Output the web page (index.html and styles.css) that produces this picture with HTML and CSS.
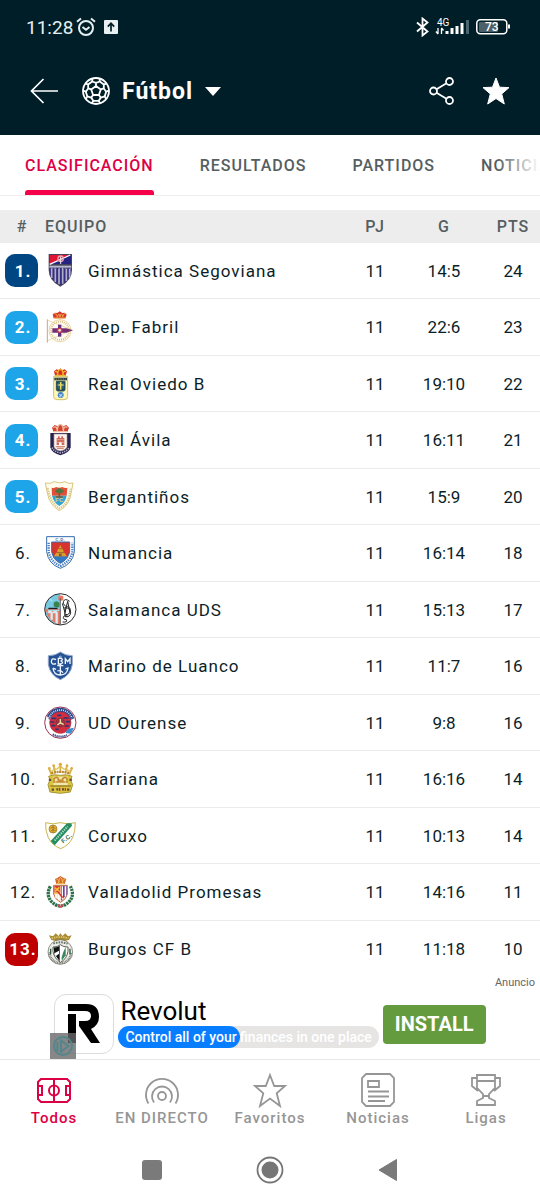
FILE: index.html
```html
<!DOCTYPE html>
<html lang="es">
<head>
<meta charset="utf-8">
<meta name="viewport" content="width=device-width, initial-scale=1">
<title>Fútbol</title>
<link rel="stylesheet" href="styles.css">
</head>
<body>
<div class="app">
  <header class="top">
    <div class="status">
      <span class="clock">11:28</span>
      <svg class="alarm" width="20" height="20" viewBox="0 0 20 20" fill="none" stroke="#e4f0f2" stroke-width="2"><circle cx="10" cy="11" r="7"/><path d="M1 4.800 5 1.500M19 4.800 15 1.500M6.500 10l3.500 2.800L13.500 10"/></svg>
      <svg width="14" height="14" viewBox="0 0 14 14"><rect width="14" height="14" rx="1" fill="#e8f0f2"/><path d="M7 11.500V4M3.800 6.600 7 3.200l3.200 3.400" fill="none" stroke="#001e28" stroke-width="1.700"/></svg>
      <span class="spacer"></span>
      <svg width="94" height="20" viewBox="0 0 94 20" fill="none">
        <path d="M1 5.500 11.500 14.500 6.500 18.500V1.500L11.500 5.500 1 14.500" stroke="#fff" stroke-width="1.800"/>
        <text x="21" y="9" class="net">4G</text>
        <path d="M22 11v6M20 14.500l2 2.500M25.500 17v-6M27.500 13.500l-2-2.500" stroke="#fff" stroke-width="1.300"/>
        <path d="M31 17v-3M36 17v-6M41 17V9M46 17V6" stroke="#fff" stroke-width="3"/><path d="M51.500 17V3" stroke="#4b6570" stroke-width="3"/>
        <rect x="60.800" y="2.800" width="30" height="14" rx="3.500" stroke="#fff" stroke-width="1.500"/><rect x="63" y="5" width="19" height="10" rx="1" fill="#4b6068"/><path d="M93 7.500v4" stroke="#fff" stroke-width="2"/>
        <text x="69" y="14" class="charge">73</text>
      </svg>
    </div>
    <div class="bar">
      <button class="icon-btn" aria-label="Volver"><svg width="28" height="26" viewBox="0 0 28 26" fill="none" stroke="#fff" stroke-width="1.700"><path d="M28 13H1.500M13.500 1 1.500 13l12 12"/></svg></button>
      <button class="sport">
        <svg width="28" height="28" viewBox="0 0 28 28" fill="none" stroke="#fff" stroke-width="1.800" stroke-linejoin="round"><circle cx="14" cy="14" r="13"/><path d="M14 9l4.800 3.500-1.900 5.500h-5.800l-1.900-5.500z"/><g id="seam"><path d="M14 9V5.800L10.200 4.500l.2-3M14 5.800l3.800-1.300-.2-3M17.800 4.500l4 2.900"/></g><use href="#seam" transform="rotate(72 14 14)"/><use href="#seam" transform="rotate(144 14 14)"/><use href="#seam" transform="rotate(216 14 14)"/><use href="#seam" transform="rotate(288 14 14)"/></svg>
        <span>Fútbol</span>
        <svg width="16" height="9" viewBox="0 0 16 9"><path d="M0 0h16L8 9z" fill="#fff"/></svg>
      </button>
      <span class="spacer"></span>
      <button class="icon-btn" aria-label="Compartir"><svg width="26" height="28" viewBox="0 0 26 28" fill="none" stroke="#fff" stroke-width="1.800"><circle cx="4.500" cy="14" r="3.500"/><circle cx="20.500" cy="4.500" r="3.500"/><circle cx="20.500" cy="23.500" r="3.500"/><path d="M7.500 12.200 17.500 6.300M7.500 15.800l10 5.900"/></svg></button>
      <button class="icon-btn" aria-label="Favorito"><svg width="28" height="28" viewBox="0 0 28 28"><path d="M14 1l3.500 9.200 9.500.4-7.300 6.300 2.600 10.100L14 21.500 5.700 27l2.600-10.100L1 10.600l9.500-.4z" fill="#fff" stroke="#fff" stroke-linejoin="round"/></svg></button>
    </div>
  </header>

  <nav class="tabs">
    <a href="#" class="tab active">CLASIFICACIÓN</a>
    <a href="#" class="tab">RESULTADOS</a>
    <a href="#" class="tab">PARTIDOS</a>
    <a href="#" class="tab">NOTICIAS</a>
  </nav>

  <main>
  <table class="standings">
    <colgroup><col class="c-rank"><col><col class="c-pj"><col class="c-g"><col class="c-pts"></colgroup>
    <thead><tr><th>#</th><th class="team">EQUIPO</th><th>PJ</th><th>G</th><th>PTS</th></tr></thead>
    <tbody>
    <tr><td><span class="rank promo">1.</span></td><td class="team"><div class="club">
      <svg class="crest" viewBox="0 0 102 102"><path d="M14 0h70v48Q84 80 49 98 14 80 14 48z" fill="#434259"/><path d="M17 3h64v27H17z" fill="#242480"/><path d="M17 3h60L17 31z" fill="#df1735"/><path d="M17 31 79 3" stroke="#fff" stroke-width="4"/><circle cx="50" cy="14" r="8" fill="none" stroke="#f2a0ae" stroke-width="4"/><path d="M50 8v22" stroke="#eee" stroke-width="3"/><path d="M17 36h64v13Q81 76 49 93 17 76 17 49z" fill="#382b83"/><path d="M23 41v31M34 41v43M45 41v50M56 41v48M67 41v40M77 41v30" stroke="#adb3c8" stroke-width="5"/><path d="M16 38h66" stroke="#b9bbcc" stroke-width="6"/><path d="M18 43h61" stroke="#54506f" stroke-width="3" stroke-dasharray="4 4"/></svg>
      <span>Gimnástica Segoviana</span></div></td><td>11</td><td>14:5</td><td>24</td></tr>
    <tr><td><span class="rank playoff">2.</span></td><td class="team"><div class="club">
      <svg class="crest" viewBox="0 0 102 102"><path d="M29 25 26 13l7-5 7 1 7-5 8 5 7-1 6 6-4 11z" fill="#d63431"/><path d="M28 12q10-5 12 10Q46 2 48 21q4-19 8 0 4-15 11-9M29 24h37" fill="none" stroke="#efa540" stroke-width="3"/><circle cx="48" cy="62" r="33" fill="#fffdf4" stroke="#e8d6a1" stroke-width="3"/><circle cx="48" cy="62" r="27" fill="none" stroke="#d8bc79" stroke-width="5" stroke-dasharray="3 3"/><path d="M10 28v70" stroke="#c6aa76" stroke-width="3"/><path d="M11 31 85 60 11 92" fill="none" stroke="#dfc68b" stroke-width="2"/><path d="M25 55h42l20 6-20 7H25z" fill="#752d73"/><path d="M42 44h10v36H42z" fill="#67317b"/><circle cx="47" cy="61" r="8" fill="#c3424f"/><circle cx="47" cy="61" r="4" fill="#eee0d4"/></svg>
      <span>Dep. Fabril</span></div></td><td>11</td><td>22:6</td><td>23</td></tr>
    <tr><td><span class="rank playoff">3.</span></td><td class="team"><div class="club">
      <svg class="crest" viewBox="0 0 102 102"><path d="M33 26 30 13l8-6 6 3 5-6 6 6 7-3 7 6-4 13z" fill="#d72d26"/><path d="M33 14q8-4 8 10 0-18 8-16 8-2 8 16 0-14 9-10M34 25h31" fill="none" stroke="#f3b427" stroke-width="4"/><path d="M29 28h42v61q0 9-11 9H40q-11 0-11-9z" fill="#fff7ba" stroke="#d5c165" stroke-width="3"/><path d="M31 32h38v8H31z" fill="#273d43"/><path d="M35 36h30" stroke="#d1c86d" stroke-width="2" stroke-dasharray="4 3"/><path d="M37 43h26v24q0 5-5 5H42q-5 0-5-5z" fill="#164a64" stroke="#32514e" stroke-width="3"/><path d="M50 45v23M41 54h18" stroke="#edd759" stroke-width="5"/><path d="M43 47v18M57 47v18" stroke="#588d9a" stroke-width="2"/><circle cx="50" cy="84" r="9" fill="#3c82c4"/><path d="M44 81l6 3 6-3M50 84v8M45 90l5-6 6 5" stroke="#dceefc" stroke-width="2" fill="none"/></svg>
      <span>Real Oviedo B</span></div></td><td>11</td><td>19:10</td><td>22</td></tr>
    <tr><td><span class="rank playoff">4.</span></td><td class="team"><div class="club">
      <svg class="crest" viewBox="0 0 102 102"><path d="M19 30h61v43Q77 89 49 97 22 89 19 73z" fill="#26224e"/><path d="M29 27 24 14l8-8 9 4 8-7 9 7 9-4 8 8-5 13z" fill="#d34232"/><path d="M28 13q12-6 12 13 0-21 9-22 9 1 9 22 0-19 12-13M29 26h41" fill="none" stroke="#f2c0a0" stroke-width="4"/><path d="M30 33h39v37q0 10-20 14-19-4-19-14z" fill="#faf5f0" stroke="#ad9399" stroke-width="2"/><path d="M38 45h4v-5h5v5h5v-5h5v5h4v21H38z" fill="#cf6357"/><path d="M38 50h23M38 58h23" stroke="#f5c4a9" stroke-width="2"/><path d="M45 66v-6q4-6 8 0v6z" fill="#fff"/><path d="M35 71h28M39 76h20" stroke="#d48b72" stroke-width="4"/><path d="M24 74q7 12 25 16 19-4 26-16" fill="none" stroke="#bbb5ca" stroke-width="5" stroke-dasharray="4 3"/></svg>
      <span>Real Ávila</span></div></td><td>11</td><td>16:11</td><td>21</td></tr>
    <tr><td><span class="rank playoff">5.</span></td><td class="team"><div class="club">
      <svg class="crest" viewBox="0 0 102 102"><path d="M4 9q16 4 26-4 17 7 33 0 10 8 24 4-5 29-10 48-8 22-31 35-22-13-31-35Q9 38 4 9z" fill="#fffcec" stroke="#dac57b" stroke-width="3"/><path d="M11 25q5 20 12 36 9 16 23 24 17-8 26-26 5-12 8-33" fill="none" stroke="#d1c583" stroke-width="6" stroke-dasharray="4 3"/><path d="M23 23q7 3 13-2 10 5 20 0 6 5 14 2l-2 24H24z" fill="#e44e36"/><path d="M24 47h44q-4 21-22 31-16-9-22-31z" fill="#30a3d5"/><path d="M46 32v19M36 51h20" stroke="#775d33" stroke-width="5"/><path d="M34 35q0-8 7-7 5-8 11 0 8 0 7 8-6 5-12 2-7 3-13-3z" fill="#517541"/><text x="46" y="67" class="art a18" fill="#ded36b">FC</text></svg>
      <span>Bergantiños</span></div></td><td>11</td><td>15:9</td><td>20</td></tr>
    <tr><td><span class="rank">6.</span></td><td class="team"><div class="club">
      <svg class="crest" viewBox="0 0 102 102"><path d="M8 2h83v45q-5 37-42 50Q13 84 8 47z" fill="#fff" stroke="#316cae" stroke-width="3"/><path d="M14 20v27q6 30 35 43 31-14 36-43V20" fill="none" stroke="#4b7dbd" stroke-width="7" stroke-dasharray="4 3"/><text x="49" y="15" class="art a13" fill="#316cae">C.D.</text><path d="M23 18h54v29q-5 24-28 35Q27 71 23 47z" fill="#d9332e" stroke="#316cae" stroke-width="3"/><path d="M27 63l10-5 10 4 12-3 14 4q-9 11-24 19-15-8-22-19z" fill="#347cc2"/><path d="M30 61q3-8 9-12 1-9 6-14l4-8 4 8q5 5 6 14 6 4 9 12z" fill="#d6a22d"/><path d="M39 50h21M44 38h11" stroke="#95652f" stroke-width="3"/><path d="M45 60v-7h8v7z" fill="#8c522d"/></svg>
      <span>Numancia</span></div></td><td>11</td><td>16:14</td><td>18</td></tr>
    <tr><td><span class="rank">7.</span></td><td class="team"><div class="club">
      <svg class="crest" viewBox="0 0 102 102"><circle cx="49" cy="49" r="47" fill="#fff"/><path d="M49 3v92A46 46 0 0 1 49 3" fill="#78cae2"/><path d="M5 48h44v47Q12 88 5 48z" fill="#e77b69"/><path d="M13 60q5-8 10 0v20M28 60q6-8 10 0v32" fill="none" stroke="#d6edf1" stroke-width="7"/><path d="M14 44h25l3 5H12z" fill="#231b20"/><path d="M29 29q8-9 17 0v12q-9 6-17-2z" fill="#37824f"/><path d="M43 10q7-5 15 0v11q-8 4-15 0z" fill="#ec7860"/><path d="M15 22q8-5 9 3M12 52h34" fill="none" stroke="#a9dfec" stroke-width="4"/><path d="M49 16v78" stroke="#333" stroke-width="2"/><path d="M77 25Q62 14 58 26q-1 12 12 15t7 18q-5 10-17 3M55 31l8 28 8-34 7 34M63 42v29q16 3 17-13-1-13-17-14M72 70q-14-5-14 4 1 7 9 6 5 9-11 7" fill="none" stroke="#242424" stroke-width="3"/><circle cx="49" cy="49" r="47" fill="none" stroke="#292929" stroke-width="3"/></svg>
      <span>Salamanca UDS</span></div></td><td>11</td><td>15:13</td><td>17</td></tr>
    <tr><td><span class="rank">8.</span></td><td class="team"><div class="club">
      <svg class="crest" viewBox="0 0 102 102"><path d="M13 20q22 0 36-11 15 11 36 11v27q-5 32-36 45-31-14-36-45z" fill="#245294" stroke="#93a9cd" stroke-width="3"/><path d="M36 32q-12-7-14 5 0 12 14 7M64 45V29l7 9 7-9v16M43 45V28h8q8 3 0 8 9 4 0 9z" fill="none" stroke="#f4f8ff" stroke-width="4"/><path d="M49 45v31M40 50h18M27 57q2 21 22 21t23-21l-8 3M27 57l9 4M40 66q10-4 17 5" fill="none" stroke="#eef4ff" stroke-width="4"/><circle cx="49" cy="24" r="3" fill="none" stroke="#eef4ff" stroke-width="2"/></svg>
      <span>Marino de Luanco</span></div></td><td>11</td><td>11:7</td><td>16</td></tr>
    <tr><td><span class="rank">9.</span></td><td class="team"><div class="club">
      <svg class="crest" viewBox="0 0 102 102"><circle cx="49" cy="50" r="47" fill="#fff" stroke="#9d3052" stroke-width="3"/><path d="M9 30A44 44 0 0 1 91 37L78 43Q61 17 39 22 23 26 16 42z" fill="#2a498a"/><path d="M14 37A37 37 0 0 1 84 37" fill="none" stroke="#dbe4f2" stroke-width="5" stroke-dasharray="3 3"/><circle cx="49" cy="50" r="32" fill="#d42e3e" stroke="#b22d4b" stroke-width="2"/><path d="M22 37h15M19 48h12M22 59h12M58 36h16M66 47h13M62 60h13M34 70h10M40 28h12" stroke="#283873" stroke-width="5"/><circle cx="49" cy="50" r="13" fill="#9c3540" stroke="#782b38" stroke-width="2"/><path d="M49 50V39M49 50l10 6M49 50l-9 7" stroke="#eadcaa" stroke-width="4"/><path d="M70 69l20-4-9 18-16-2z" fill="#3b8ec9"/><path d="M26 85q22 12 43 2" fill="none" stroke="#344889" stroke-width="6" stroke-dasharray="4 2"/></svg>
      <span>UD Ourense</span></div></td><td>11</td><td>9:8</td><td>16</td></tr>
    <tr><td><span class="rank">10.</span></td><td class="team"><div class="club">
      <svg class="crest" viewBox="0 0 102 102"><path d="M22 38 15 20M34 33 29 12M49 33V7M64 33l5-21M76 38l7-18" stroke="#d8b13b" stroke-width="5"/><path d="M18 24q7 9 13-6 7 10 18-8 11 18 18 8 6 15 13 6" fill="none" stroke="#dfbd52" stroke-width="4"/><g fill="#e0ac3c"><circle cx="16" cy="19" r="4"/><circle cx="29" cy="11" r="4"/><circle cx="49" cy="7" r="5"/><circle cx="69" cy="11" r="4"/><circle cx="83" cy="19" r="4"/></g><path d="M22 34q27-9 54 0" fill="none" stroke="#b9862f" stroke-width="7" stroke-dasharray="6 2"/><path d="M14 43q15-8 35-3 20-5 35 3l-4 12 6 13-7 22q-30 8-61 0l-6-22 6-14z" fill="#d8c640" stroke="#a99537" stroke-width="3"/><path d="M28 44h43v26H28z" fill="#f0e7ad"/><path d="M30 63V50q8-8 13 0v5h13v-5q8-8 13 0v13M34 60h31" fill="none" stroke="#c48b32" stroke-width="5"/><path d="M19 72h62" stroke="#977a27" stroke-width="4"/><path d="M23 83h7M37 82h6M54 82h6M69 83h7M18 50v7M80 50v7" stroke="#674a31" stroke-width="7"/><path d="M47 77v10M64 78v9" stroke="#bd382d" stroke-width="4"/></svg>
      <span>Sarriana</span></div></td><td>11</td><td>16:16</td><td>14</td></tr>
    <tr><td><span class="rank">11.</span></td><td class="team"><div class="club">
      <svg class="crest" viewBox="0 0 102 102"><path d="M5 11q23 7 44 0 21 7 45 0 0 25-8 45-11 23-36 33-26-10-37-33Q3 34 5 11z" fill="#fffef8" stroke="#c7b64d" stroke-width="3"/><path d="M69 13 20 66l12 13 52-59-2-7z" fill="#238c62"/><path d="M32 65 71 22" stroke="#afddc8" stroke-width="6" stroke-dasharray="4 3"/><circle cx="27" cy="30" r="12" fill="#ebb72f" stroke="#8a6b29" stroke-width="2"/><path d="M19 28l8-4 8 5M20 36l7-4 8 3M27 19v23" stroke="#815f28" stroke-width="2" fill="none"/><text x="68" y="64" class="art a18" fill="#316457" transform="rotate(-36 68 58)">F.C.</text></svg>
      <span>Coruxo</span></div></td><td>11</td><td>10:13</td><td>14</td></tr>
    <tr><td><span class="rank">12.</span></td><td class="team"><div class="club">
      <svg class="crest" viewBox="0 0 102 102"><path d="M37 27 33 12l8-4 8-5 9 5 9 4-5 15z" fill="#d46732"/><path d="M37 12q8 0 7 13 1-17 6-18 5 1 6 18-1-13 8-13M38 26h23" fill="none" stroke="#f2bd4d" stroke-width="3"/><path d="M19 34q-14 26 3 45 13 14 26 14 15 0 28-14 17-19 3-45" fill="none" stroke="#2d704c" stroke-width="10" stroke-dasharray="7 2"/><path d="M40 89l9 7 10-7" fill="none" stroke="#d14b51" stroke-width="5"/><path d="M29 31h41v26q-2 15-20 25-19-10-21-25z" fill="#f4e6da" stroke="#ba6839" stroke-width="3"/><path d="M31 33h18v20H31z" fill="#d63a30"/><path d="M51 33h17v25l-17 20z" fill="#6d3d9b"/><path d="M32 38l15 12M33 49l13-12M31 54h17" stroke="#f5ba35" stroke-width="5"/><path d="M55 34v38M64 34v29M36 57v13M44 57v19" stroke="#fff" stroke-width="4"/><path d="M42 50l14 18" stroke="#d63b31" stroke-width="5"/></svg>
      <span>Valladolid Promesas</span></div></td><td>11</td><td>14:16</td><td>11</td></tr>
    <tr><td><span class="rank drop">13.</span></td><td class="team"><div class="club">
      <svg class="crest" viewBox="0 0 102 102"><path d="M22 24 15 10l12 3 8-9 9 8 5-9 6 9 9-8 8 9 11-3-8 14q-27 8-53 0z" fill="#a98b32"/><path d="M23 19q26-8 50 0" fill="none" stroke="#e0ca75" stroke-width="5" stroke-dasharray="4 3"/><circle cx="49" cy="60" r="37" fill="#eeeeea" stroke="#5d5d55" stroke-width="2"/><path d="M17 61a32 32 0 0 0 64 0" fill="none" stroke="#818579" stroke-width="7" stroke-dasharray="3 2"/><path d="M28 35q20-8 43 0" fill="none" stroke="#697265" stroke-width="6" stroke-dasharray="5 3"/><path d="M27 45q13 1 22-7 10 8 23 7v13q-4 23-22 33-19-10-23-33z" fill="#fff" stroke="#596056" stroke-width="3"/><path d="M29 46q11 1 18-5v47L31 66z" fill="#111"/><path d="M65 45v25l-12 17V76l5-16z" fill="#3c855b"/><path d="M31 64l14-8v9l-10 8z" fill="#fff"/><path d="M20 50v17M78 50v17" stroke="#2d593e" stroke-width="4"/></svg>
      <span>Burgos CF B</span></div></td><td>11</td><td>11:18</td><td>10</td></tr>
    </tbody>
  </table>
  </main>

  <section class="ad">
    <p class="ad-label">Anuncio</p>
    <div class="ad-body">
      <div class="ad-logo">
        <svg width="32" height="40" viewBox="0 0 32 40"><path d="M0 10h8v29H0z" fill="#000"/><path d="M0 0h18q13 0 13 13 0 8-8 12l9 14h-9L11 22v-5h6q6 0 6-5t-6-5H0z" fill="#000"/></svg>
        <span class="ad-choice"><svg width="20" height="20" viewBox="0 0 20 20" fill="none" stroke="#53868c" stroke-width="2"><circle cx="10" cy="10" r="9"/><path d="M8 4.500v11L15.500 10zM4.500 6v9"/></svg></span>
      </div>
      <div class="ad-copy">
        <div class="ad-name">Revolut</div>
        <div class="ad-line"><span class="ad-lit">Control all of your</span><span>finances in one place</span></div>
      </div>
      <button class="install">INSTALL</button>
    </div>
  </section>

  <nav class="bottom">
    <a href="#" class="item on"><svg width="36" height="36" viewBox="0 0 36 36" fill="none" stroke="currentColor" stroke-width="2"><path d="M5 7h26l3 3v17l-3 3H5l-3-3V10zM18 7v23M2 14h4v9H2M34 14h-4v9h4"/><circle cx="18" cy="18.500" r="5"/></svg><span>Todos</span></a>
    <a href="#" class="item"><svg width="36" height="36" viewBox="0 0 36 36" fill="none" stroke="currentColor" stroke-width="1.800"><circle cx="18" cy="24" r="4"/><path d="M10 30.500a10 10 0 1 1 16 0M4.500 31.500a16 16 0 1 1 27 0"/></svg><span>EN DIRECTO</span></a>
    <a href="#" class="item"><svg width="36" height="36" viewBox="0 0 36 36" fill="none" stroke="currentColor" stroke-width="1.800"><path d="M18 3l4.200 11H33l-8.300 7.300L28 34l-10-7.500L8 34l3.300-12.700L3 14h10.800z"/></svg><span>Favoritos</span></a>
    <a href="#" class="item"><svg width="36" height="36" viewBox="0 0 36 36" fill="none" stroke="currentColor" stroke-width="1.800"><path d="M6 2h24l4 4v24l-4 4H6l-4-4V6zM8 9h11v6H8zM8 19.500h21M8 24.500h21M8 29h17"/></svg><span>Noticias</span></a>
    <a href="#" class="item"><svg width="36" height="36" viewBox="0 0 36 36" fill="none" stroke="currentColor" stroke-width="1.800"><path d="M9 3h18v13l-6 6v4l6 3v4H9v-4l6-3v-4l-6-6zM9 9h18M9 6H4v8l6 5M27 6h5v8l-6 5M15 24h6"/></svg><span>Ligas</span></a>
  </nav>
  <div class="system">
    <button class="icon-btn" aria-label="Recientes"><svg width="28" height="28" viewBox="0 0 28 28"><rect x="4" y="4" width="20" height="20" rx="3" fill="#7a7a7a"/></svg></button>
    <button class="icon-btn" aria-label="Inicio"><svg width="28" height="28" viewBox="0 0 28 28"><circle cx="14" cy="14" r="12.500" fill="none" stroke="#767676" stroke-width="1.800"/><circle cx="14" cy="14" r="8.500" fill="#767676"/></svg></button>
    <button class="icon-btn" aria-label="Atrás"><svg width="28" height="28" viewBox="0 0 28 28"><path d="M22.500 3.500v21L5 14z" fill="#7a7a7a" stroke="#7a7a7a" stroke-linejoin="round"/></svg></button>
  </div>
</div>
</body>
</html>
```
FILE: styles.css
```css
* { box-sizing: border-box; }
body { margin: 0; background: #fff; color: #0b1e28; font-family: Roboto, "Liberation Sans", sans-serif; }
button { border: 0; padding: 0; background: none; color: inherit; font: inherit; }
a { color: inherit; text-decoration: none; }
svg { display: block; flex: none; }
.app { display: flex; flex-direction: column; min-height: 100vh; overflow: hidden; }
.spacer { flex: 1; }

.top { background: #001e28; color: #fff; height: 135px; }
.status { display: flex; align-items: center; height: 54px; padding: 0 30px 0 26px; }
.clock { font-size: 19px; color: #e4f0f2; }
.alarm { margin: 0 8px 0 3px; }
.net { font-size: 10px; fill: #fff; }
.charge { font-size: 12px; font-weight: 500; fill: #fff; }
.bar { display: flex; align-items: center; height: 74px; padding: 0 30px; }
.icon-btn { display: flex; }
.icon-btn + .icon-btn { margin-left: 27px; }
.sport { display: flex; align-items: center; gap: 12px; margin-left: 24px; font-size: 23px; font-weight: 700; letter-spacing: 1px; }

.tabs { position: relative; display: flex; gap: 46px; height: 61px; padding: 0 25px; border-bottom: 1px solid #eee; overflow: hidden; }
.tabs::after { content: ""; position: absolute; right: 0; top: 0; width: 44px; height: 100%; background: linear-gradient(90deg, rgba(255,255,255,0), #fff); }
.tab { flex: none; font-size: 16px; font-weight: 500; line-height: 61px; letter-spacing: 1px; color: #555e61; }
.active { position: relative; color: #dc0045; }
.active::after { content: ""; position: absolute; left: 0; right: 0; bottom: 0; height: 5px; border-radius: 3px 3px 0 0; background: #f5004a; }

.standings { width: 100%; margin-top: 14px; table-layout: fixed; border-collapse: separate; border-spacing: 0; }
.c-rank { width: 44px; }
.c-pj, .c-pts { width: 54px; }
.c-g { width: 84px; }
th { height: 33px; padding: 0; background: #ededed; color: #555e61; font-size: 16px; font-weight: 500; letter-spacing: 1px; }
th.team { padding-left: 1px; }
td { height: 56px; padding: 0; border-bottom: 1px solid #ebebeb; font-size: 17px; text-align: center; }
tr:nth-child(even) td { height: 57px; }
tr:last-child td { border-bottom: 0; }
.team { text-align: left; }
.club { display: flex; align-items: center; gap: 10px; letter-spacing: 1px; }
.crest { width: 34px; height: 34px; }
.rank { display: flex; align-items: center; justify-content: center; width: 33px; height: 33px; margin-left: 5px; padding-left: 3px; border-radius: 10px; letter-spacing: 1px; }
.promo, .playoff, .drop { color: #fff; font-weight: 700; }
.promo { background: #004682; }
.playoff { background: #1ea5e9; }
.drop { background: #be0000; }
.art { font-family: "Liberation Sans", sans-serif; font-weight: 700; text-anchor: middle; }
.a18 { font-size: 18px; }
.a13 { font-size: 13px; }

.ad { border-bottom: 1px solid #e8e8e8; }
.ad-label { margin: 0; padding: 0 5px; color: #666; font-size: 11px; line-height: 12px; text-align: right; }
.ad-body { display: flex; align-items: center; justify-content: center; height: 70px; gap: 4px; }
.ad-logo { position: relative; display: flex; align-items: center; justify-content: center; width: 60px; height: 60px; border: 1px solid #ddd; border-radius: 12px; }
.ad-choice { position: absolute; left: -5px; bottom: -6px; display: flex; align-items: center; justify-content: center; width: 26px; height: 26px; background: rgba(105,105,105,.8); }
.ad-copy { padding-bottom: 4px; color: #000; }
.ad-name { font-size: 26px; line-height: 28px; padding: 1px 2px; }
.ad-line { display: flex; height: 22px; border-radius: 11px; background: #e6e5e4; color: #fff; font-size: 14px; font-weight: 500; line-height: 22px; padding-right: 7px; }
.ad-lit { padding: 0 3px 0 7px; border-radius: 11px; background: #077dff; }
.install { height: 39px; padding: 0 12px; border-radius: 4px; background: #659b3f; color: #fff; font-size: 20px; font-weight: 700; }

.bottom { display: grid; grid-template-columns: repeat(5, 1fr); padding-top: 12px; }
.item { display: flex; flex-direction: column; align-items: center; color: #969696; font-size: 15px; font-weight: 500; line-height: 20px; letter-spacing: 1px; }
.on { color: #dc0045; }
.system { display: flex; justify-content: center; gap: 90px; padding: 28px 0 18px; }
.system .icon-btn { margin: 0; }
```
